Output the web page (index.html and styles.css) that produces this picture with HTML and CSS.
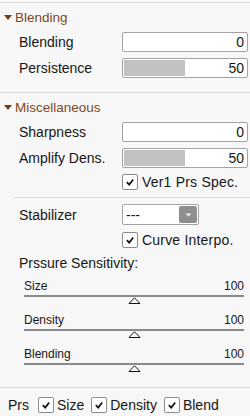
FILE: index.html
```html
<!DOCTYPE html>
<html lang="en">

<head>
    <meta charset="UTF-8">
    <meta name="viewport" content="width=device-width, initial-scale=1.0">
    <title>Brush settings</title>
    <link rel="stylesheet" href="styles.css">
</head>

<body>
    <div class="panel">
        <section class="group group-blend">
            <div class="group-head"><span class="caret"></span>Blending</div>
            <div class="rows">
                <div class="row">
                    <span class="label">Blending</span>
                    <div class="num"><span class="value">0</span></div>
                </div>
                <div class="row">
                    <span class="label">Persistence</span>
                    <div class="num"><div class="fill" style="width: 50%"></div><span class="value">50</span></div>
                </div>
            </div>
        </section>

        <section class="group group-misc">
            <div class="group-head"><span class="caret"></span>Miscellaneous</div>
            <div class="rows">
                <div class="row">
                    <span class="label">Sharpness</span>
                    <div class="num"><span class="value">0</span></div>
                </div>
                <div class="row">
                    <span class="label">Amplify Dens.</span>
                    <div class="num"><div class="fill" style="width: 50%"></div><span class="value">50</span></div>
                </div>
                <label class="check indent">
                    <span class="box"><svg width="16" height="16" viewBox="0 0 16 16"><path d="M4.8 8.2 L7.2 10.6 L11.2 5.4" /></svg></span>
                    Ver1 Prs Spec.
                </label>
            </div>

            <div class="sub">
                <div class="row">
                    <span class="label">Stabilizer</span>
                    <div class="select">
                        <span>---</span>
                        <span class="drop"><svg width="7" height="4" viewBox="0 0 7 4"><path d="M0.5 0.5 H6.5 L3.5 3.5 Z" /></svg></span>
                    </div>
                </div>
                <label class="check indent">
                    <span class="box"><svg width="16" height="16" viewBox="0 0 16 16"><path d="M4.8 8.2 L7.2 10.6 L11.2 5.4" /></svg></span>
                    Curve Interpo.
                </label>
                <div class="caption">Prssure Sensitivity:</div>

                <div class="sliders">
                    <div class="slider">
                        <div class="slider-head"><span>Size</span><span>100</span></div>
                        <div class="track"></div>
                        <svg class="thumb" width="13" height="7" viewBox="0 0 13 7"><path d="M6.5 0.8 L12 6.5 H1 Z" /></svg>
                    </div>
                    <div class="slider">
                        <div class="slider-head"><span>Density</span><span>100</span></div>
                        <div class="track"></div>
                        <svg class="thumb" width="13" height="7" viewBox="0 0 13 7"><path d="M6.5 0.8 L12 6.5 H1 Z" /></svg>
                    </div>
                    <div class="slider">
                        <div class="slider-head"><span>Blending</span><span>100</span></div>
                        <div class="track"></div>
                        <svg class="thumb" width="13" height="7" viewBox="0 0 13 7"><path d="M6.5 0.8 L12 6.5 H1 Z" /></svg>
                    </div>
                </div>
            </div>
        </section>

        <div class="bottom">
            <span class="prs">Prs</span>
            <label class="check">
                <span class="box"><svg width="16" height="16" viewBox="0 0 16 16"><path d="M4.8 8.2 L7.2 10.6 L11.2 5.4" /></svg></span>
                Size
            </label>
            <label class="check">
                <span class="box"><svg width="16" height="16" viewBox="0 0 16 16"><path d="M4.8 8.2 L7.2 10.6 L11.2 5.4" /></svg></span>
                Density
            </label>
            <label class="check">
                <span class="box"><svg width="16" height="16" viewBox="0 0 16 16"><path d="M4.8 8.2 L7.2 10.6 L11.2 5.4" /></svg></span>
                Blend
            </label>
        </div>
    </div>
</body>

</html>
```

FILE: styles.css
```css
body {
    margin: 0;
    width: 250px;
    height: 416px;
    overflow: hidden;
    background-color: #f7f7f7;
    font-family: "Liberation Sans", Arial, sans-serif;
    font-size: 14px;
    color: #161616;
}

.panel {
    padding-top: 2px;
}

.group {
    border-top: 1px solid #dedede;
}

.group-blend {
    padding-bottom: 14px;
}

.group-head {
    display: flex;
    align-items: center;
    height: 29px;
    padding-left: 4px;
    font-size: 13.5px;
    color: #7d4724;
}

.caret {
    width: 0;
    height: 0;
    margin-right: 3px;
    border-left: 4.5px solid transparent;
    border-right: 4.5px solid transparent;
    border-top: 5px solid #6e3e1e;
}

.rows {
    display: flex;
    flex-direction: column;
    gap: 6px;
}

.row {
    display: flex;
    align-items: center;
    height: 20px;
}

.label {
    width: 122px;
    padding-left: 19px;
    box-sizing: border-box;
    flex-shrink: 0;
}

.num {
    display: grid;
    flex: 1;
    height: 20px;
    margin-right: 2px;
    padding: 1px;
    box-sizing: border-box;
    border: 1px solid #a3a3a3;
    border-radius: 2px;
    background-color: #fff;
}

.num > * {
    grid-area: 1 / 1;
}

.fill {
    background-color: #c2c2c2;
}

.value {
    justify-self: end;
    padding-right: 2px;
    line-height: 16px;
}

.check {
    display: flex;
    align-items: center;
    gap: 3px;
    height: 16px;
}

.indent {
    gap: 4px;
    padding-left: 122px;
    letter-spacing: 0.2px;
}

.box {
    width: 16px;
    height: 16px;
    box-sizing: border-box;
    border: 1px solid #8c8c8c;
    border-radius: 2px;
    background-color: #fff;
    flex-shrink: 0;
}

.box svg {
    display: block;
    margin: -1px;
}

.box path {
    fill: none;
    stroke: #111;
    stroke-width: 1.7;
}

.sub {
    margin-top: 7px;
    margin-left: 14px;
    padding-top: 6px;
    border-top: 1px solid #dedede;
}

.sub .label {
    width: 108px;
    padding-left: 5px;
}

.sub .indent {
    margin-top: 7px;
    padding-left: 108px;
}

.sub .row {
    height: 21px;
}

.select {
    display: flex;
    align-items: center;
    justify-content: space-between;
    width: 77px;
    height: 21px;
    padding: 1px 1px 1px 3px;
    box-sizing: border-box;
    border: 1px solid #a3a3a3;
    border-radius: 2px;
    background-color: #fff;
}

.drop {
    display: flex;
    align-items: center;
    justify-content: center;
    width: 18px;
    height: 17px;
    border-radius: 2px;
    background-color: #8f8f8f;
}

.drop svg {
    display: block;
}

.drop path {
    fill: #f2f2f2;
}

.caption {
    margin-top: 5px;
    padding-left: 5px;
    line-height: 20px;
}

.sliders {
    margin-top: 6px;
    margin-bottom: 6px;
}

.slider {
    height: 34px;
    margin: 0 6px 0 10px;
}

.slider-head {
    display: flex;
    justify-content: space-between;
    height: 14px;
    line-height: 14px;
    font-size: 12px;
}

.track {
    height: 2px;
    margin-top: 2px;
    background-color: #8a8a8a;
}

.thumb {
    display: block;
    margin-left: calc(50% - 6px);
}

.thumb path {
    fill: #fff;
    stroke: #111;
    stroke-width: 1;
}

.bottom {
    display: flex;
    align-items: center;
    gap: 7px;
    padding: 9px 0 0 8px;
    border-top: 1px solid #dedede;
}

.prs {
    margin-right: 2px;
}
```
